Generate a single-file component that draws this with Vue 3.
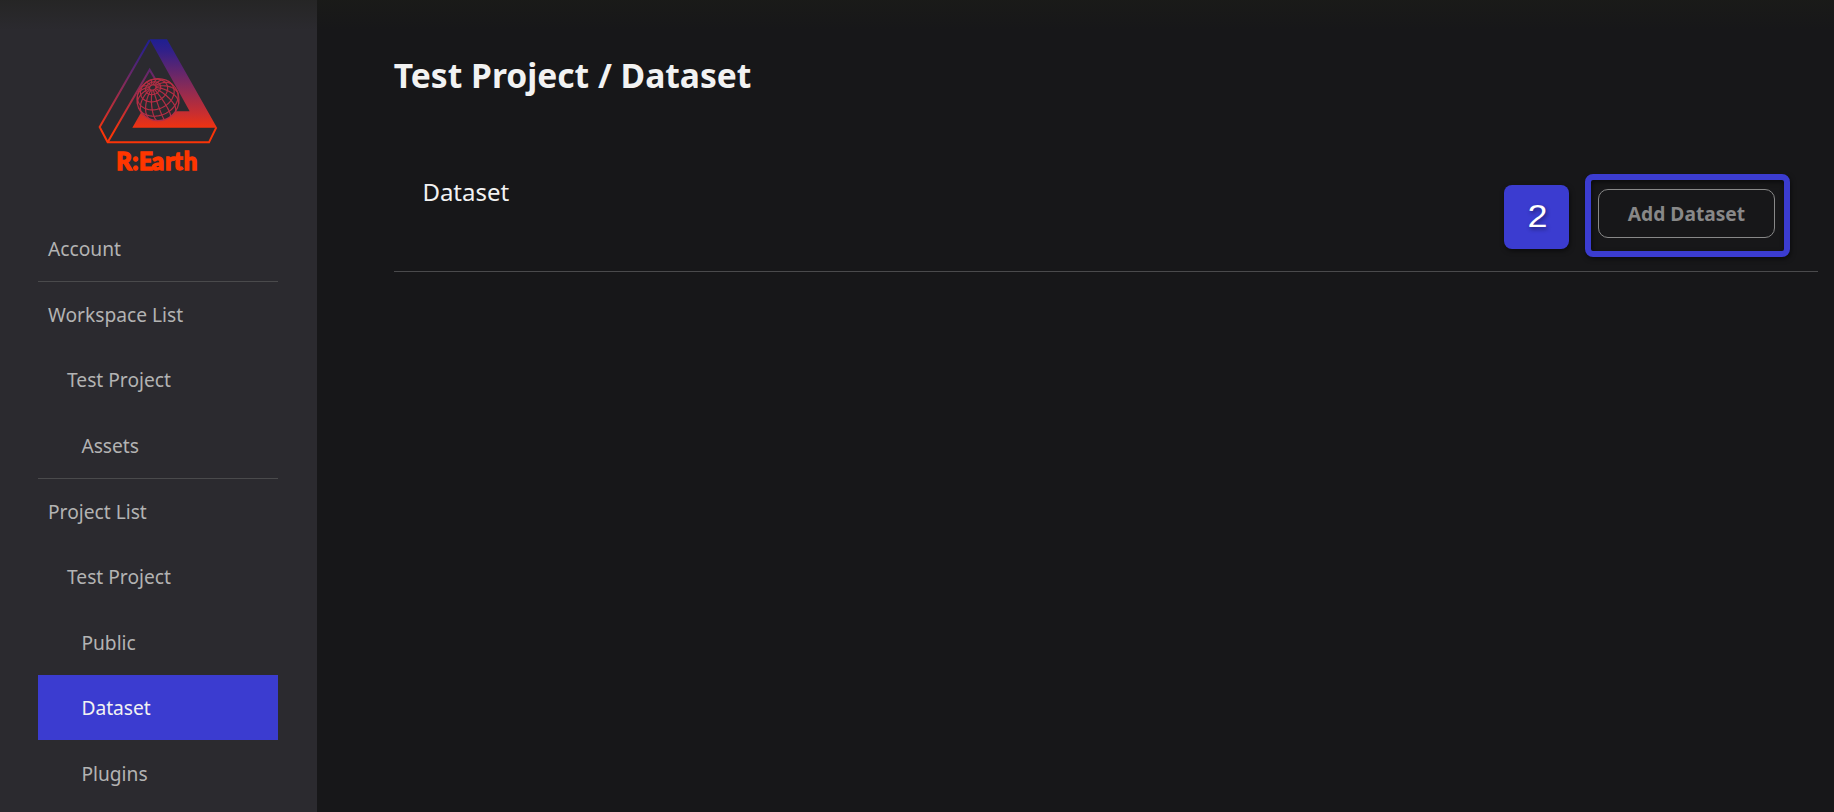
<script setup>
const items = [
  { label: 'Account', level: 0, line: true },
  { label: 'Workspace List', level: 0 },
  { label: 'Test Project', level: 1 },
  { label: 'Assets', level: 2, line: true },
  { label: 'Project List', level: 0 },
  { label: 'Test Project', level: 1 },
  { label: 'Public', level: 2 },
  { label: 'Dataset', level: 2, active: true },
  { label: 'Plugins', level: 2 },
]

// Globe graticule: orthographic projection with the pole leaning up and left.
const pole = [-0.254, 0.587, 0.769]
const cross = (a, b) => [
  a[1] * b[2] - a[2] * b[1],
  a[2] * b[0] - a[0] * b[2],
  a[0] * b[1] - a[1] * b[0],
]
const unit = (a) => a.map((v) => v / Math.hypot(...a))
const east = unit(cross(pole, [0, 1, 0]))
const north = cross(pole, east)
const rad = (deg) => (deg * Math.PI) / 180

function trace(points) {
  let d = ''
  let pen = 'M'
  for (const [colat, lon] of points) {
    const c = Math.cos(rad(colat))
    const s = Math.sin(rad(colat))
    const v = pole.map(
      (p, i) => p * c + s * (east[i] * Math.cos(rad(lon)) + north[i] * Math.sin(rad(lon))),
    )
    if (v[2] < 0) {
      pen = 'M'
      continue
    }
    d += `${pen}${(234 + 63 * v[0]).toFixed(1)} ${(239 - 63 * v[1]).toFixed(1)}`
    pen = 'L'
  }
  return d
}

const range = (from, to, step) => {
  const out = []
  for (let v = from; v <= to; v += step) out.push(v)
  return out
}
const graticule = [
  ...[9, 22, 42, 65, 88].map((colat) => trace(range(0, 360, 5).map((lon) => [colat, lon]))),
  ...range(0, 337.5, 22.5).map((lon) => trace(range(9, 130, 3).map((colat) => [colat, lon]))),
]
</script>

<template>
  <div class="page">
    <aside class="sidebar">
      <svg class="logo" viewBox="0 0 480 495" role="img" aria-label="R:Earth">
        <defs>
          <linearGradient id="tri" gradientUnits="userSpaceOnUse" x1="0" y1="58" x2="0" y2="335">
            <stop offset="0" stop-color="#1f1f92" />
            <stop offset="0.12" stop-color="#30208a" />
            <stop offset="0.5" stop-color="#842a5a" />
            <stop offset="0.8" stop-color="#c82e30" />
            <stop offset="1" stop-color="#fa3408" />
          </linearGradient>
        </defs>
        <g fill="none" stroke="url(#tri)" stroke-width="6" stroke-linejoin="miter">
          <path d="M209 60 L59 321 L83 367 L387 367 L409 322" />
          <path d="M83 367 L209 149 L229 183" />
        </g>
        <path d="M209 58 H261 L411 323 H157 L184 276 Q205 302 236 302 Q265 300 284 274 H329 Z" fill="url(#tri)" />
        <circle cx="234" cy="239" r="63" fill="#2b2a2f" />
        <g fill="none" stroke="#b42e45" stroke-width="3.6">
          <circle cx="234" cy="239" r="63" />
          <path v-for="(d, i) in graticule" :key="i" :d="d" />
        </g>
        <text class="wordmark" x="109 157 177 215 256 281 311" y="451">R:Earth</text>
      </svg>
      <nav class="menu">
        <a
          v-for="(item, i) in items"
          :key="i"
          class="item"
          :class="['level-' + item.level, { line: item.line, active: item.active }]"
        >{{ item.label }}</a>
      </nav>
    </aside>
    <main class="content">
      <h1 class="title">Test Project / Dataset</h1>
      <section class="section">
        <h2 class="subtitle">Dataset</h2>
        <div class="actions">
          <div class="step"><span class="digit">2</span></div>
          <div class="highlight"><button class="add">Add Dataset</button></div>
        </div>
      </section>
    </main>
    <div class="top-shade"></div>
  </div>
</template>

<style>
body {
  background: #171719;
  overflow: hidden;
}
</style>

<style scoped>
.page {
  position: relative;
  display: flex;
  height: 812px;
  overflow: hidden;
  background: #171719;
  font-family: "Noto Sans", sans-serif;
}
.sidebar {
  flex: none;
  box-sizing: border-box;
  width: 317px;
  padding-top: 20px;
  background: #2b2a2f;
}
.logo {
  display: block;
  width: 160px;
  height: 165px;
  margin-left: 80px;
}
.wordmark {
  font: 900 72px Lato, sans-serif;
  fill: #ff3600;
  stroke: #ff3600;
  stroke-width: 4;
}
.menu {
  display: flex;
  flex-direction: column;
  width: 240px;
  margin: 31px 0 0 38px;
}
.item {
  display: flex;
  align-items: center;
  height: 65.3px;
  color: #b3b3b3;
  font-size: 19.2px;
}
.line {
  border-bottom: 1px solid #4a4a4c;
}
.level-0 {
  padding-left: 10px;
}
.level-1 {
  box-sizing: border-box;
  padding: 0 0 1px 29px;
}
.level-2 {
  padding-left: 43.4px;
}
.active {
  background: #3b3cd0;
  color: #f2f2f2;
}
.content {
  flex: 1;
  padding: 52px 16px 0 76.8px;
}
.title {
  margin: 0;
  color: #f2f2f2;
  font-size: 33.6px;
  font-weight: 700;
  line-height: 46px;
}
.section {
  display: flex;
  justify-content: space-between;
  box-sizing: border-box;
  height: 99px;
  margin-top: 75px;
  padding: 0 28px 0 28.6px;
  border-bottom: 1px solid #4a4a4c;
}
.subtitle {
  margin: 3px 0 0;
  color: #f2f2f2;
  font-size: 24px;
  font-weight: 400;
  line-height: 32px;
}
.actions {
  display: flex;
  align-items: flex-start;
  gap: 15.5px;
}
.step {
  width: 65px;
  height: 64px;
  margin-top: 12.4px;
  padding-left: 3px;
  box-sizing: border-box;
  border-radius: 8px;
  background: #3b3cd0;
  box-shadow: 1px 2px 5px #0008;
  color: #fff;
  font: 31px/64px "Liberation Sans", sans-serif;
  text-align: center;
  text-shadow: 1px 2px 4px #0007;
}
.digit {
  display: inline-block;
  transform: scaleX(1.16);
}
.highlight {
  box-sizing: border-box;
  width: 205.5px;
  height: 83px;
  margin-top: 0.5px;
  padding: 9.5px 7.5px;
  border: 6px solid #3b3cd0;
  border-radius: 8px;
  box-shadow: 1px 2px 5px #0008, inset 1px 2px 5px #0008;
}
.add {
  display: block;
  box-sizing: border-box;
  width: 177px;
  height: 49px;
  padding: 0;
  border: 1px solid #888;
  border-radius: 10px;
  background: transparent;
  color: #888;
  font: 700 19.2px "Noto Sans", sans-serif;
}
.top-shade {
  position: absolute;
  inset: 0 0 auto;
  height: 30px;
  background: linear-gradient(rgba(30, 31, 24, 0.42), rgba(30, 31, 24, 0));
}
</style>
